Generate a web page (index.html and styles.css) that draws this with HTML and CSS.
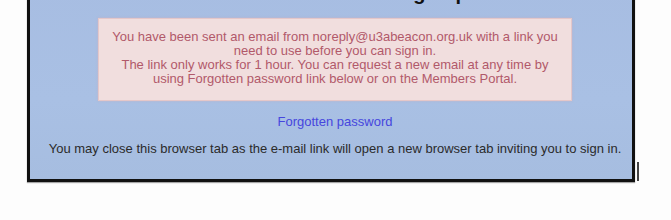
FILE: index.html
```html
<!DOCTYPE html>
<html lang="en">

<head>
    <meta charset="UTF-8">
    <meta name="viewport" content="width=device-width, initial-scale=1.0">
    <title>Sign up</title>
    <link rel="stylesheet" href="styles.css">
</head>

<body>
    <div class="frame">
        <h2 class="heading">Almost done: finish Sign up</h2>

        <div class="notice">
            You have been sent an email from noreply@u3abeacon.org.uk with a link you<br>
            need to use before you can sign in.<br>
            The link only works for 1 hour. You can request a new email at any time by<br>
            using Forgotten password link below or on the Members Portal.
        </div>

        <div class="links">
            <a href="#" class="forgot">Forgotten password</a>
        </div>

        <p class="note">You may close this browser tab as the e-mail link will open a new browser tab inviting you to sign in.</p>
    </div>

    <span class="caret"></span>
</body>

</html>
```

FILE: styles.css
```css
body {
    margin: 0;
    background: #fdfdfd;
    font-family: 'Liberation Sans', Arial, sans-serif;
    position: relative;
    height: 220px;
    overflow: hidden;
}

.frame {
    width: 594px;
    margin-left: 27px;
    padding: 0 0 22px 8px;
    background: linear-gradient(180deg, #a7bde2 0%, #a9c0e4 60%, #a6bde0 100%);
    border: 3px solid #111;
    border-top: none;
    box-shadow: 0 1px 1px rgba(0, 0, 0, 0.35);
}

.heading {
    margin: -19px 0 0;
    font-size: 20px;
    line-height: 24px;
    text-align: center;
    color: #111;
}

.notice {
    box-sizing: border-box;
    width: 474px;
    margin: 13px auto 0;
    padding: 11px 6px 14px;
    background: #f1dede;
    border: 1px solid #e5c7c9;
    box-shadow: 0 0 2px rgba(220, 170, 175, 0.6);
    color: #b1596a;
    font-size: 13px;
    line-height: 14px;
    text-align: center;
}

.links {
    margin-top: 13px;
    text-align: center;
    font-size: 13px;
    line-height: 16px;
}

.forgot {
    color: #4646de;
    text-decoration: none;
}

.note {
    margin: 11px 0 0;
    text-align: center;
    font-size: 13px;
    line-height: 16px;
    color: #2b2b2b;
}

.caret {
    position: absolute;
    left: 637px;
    top: 162px;
    width: 2px;
    height: 19px;
    background: #444;
}
```
